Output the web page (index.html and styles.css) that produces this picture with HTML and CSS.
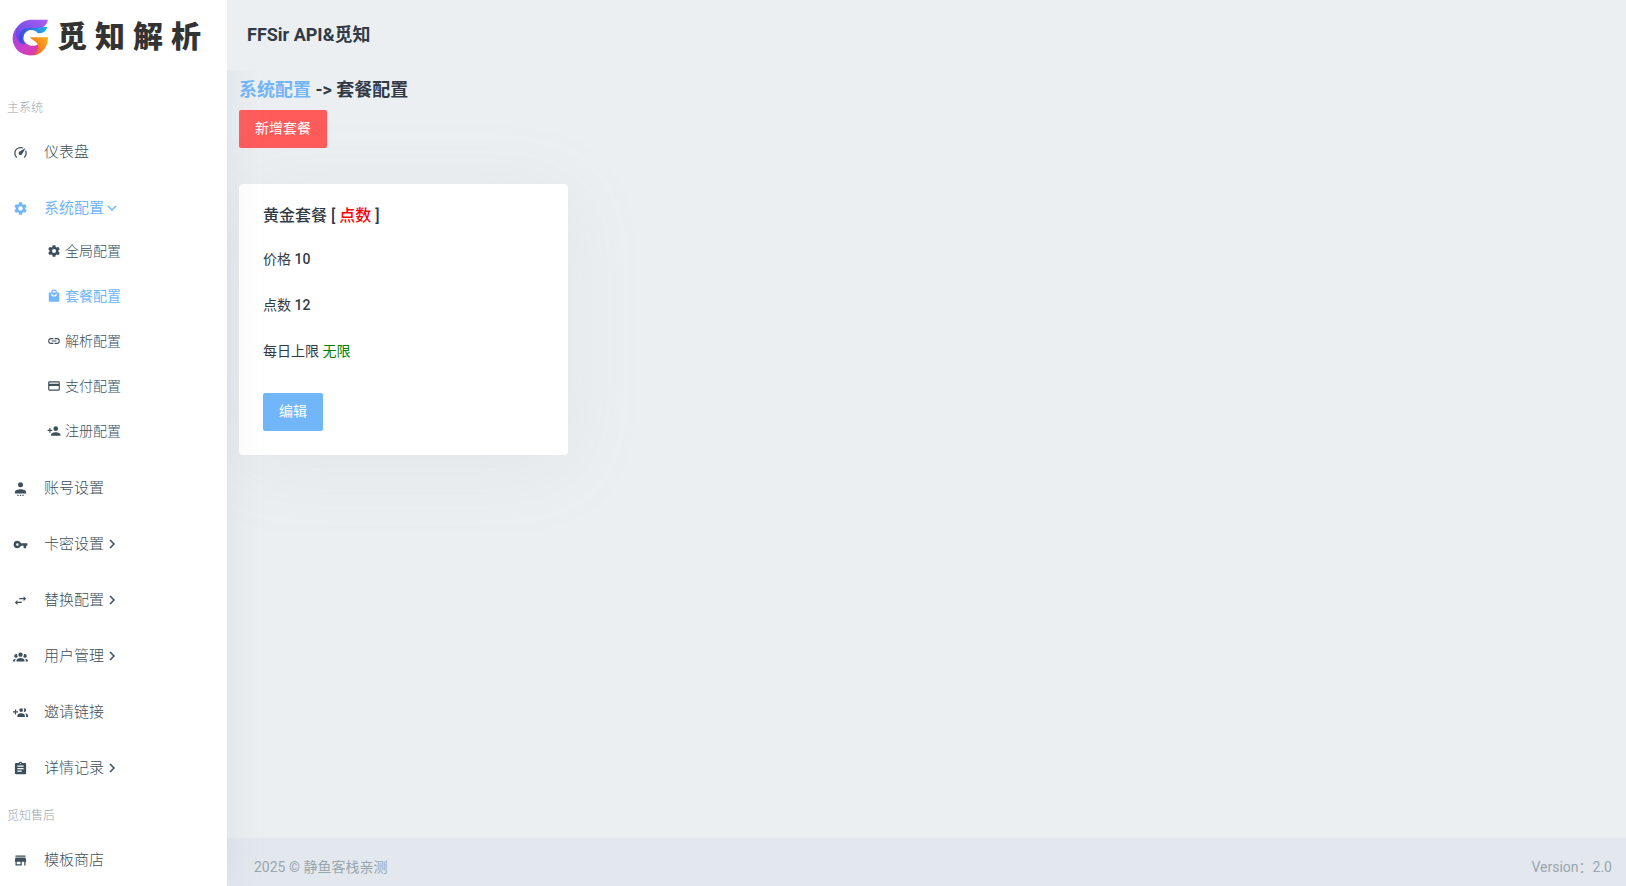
FILE: index.html
```html
<!DOCTYPE html>
<html lang="zh-CN">

<head>
    <meta charset="UTF-8">
    <meta name="viewport" content="width=device-width, initial-scale=1.0">
    <title>套餐配置</title>
    <link rel="stylesheet" href="styles.css">
</head>

<body>
    <aside class="sidebar">
        <a href="#" class="logo">
            <svg class="logo-mark" viewBox="0 0 108 110" aria-hidden="true">
                <defs>
                    <linearGradient id="ringTop" x1="0" y1="1" x2="1" y2="0">
                        <stop offset="0" stop-color="#5a48e8" />
                        <stop offset="1" stop-color="#b05cf0" />
                    </linearGradient>
                    <linearGradient id="ringBottom" x1="0" y1="0" x2="1" y2="1">
                        <stop offset="0" stop-color="#8450e0" />
                        <stop offset="0.5" stop-color="#c840d0" />
                        <stop offset="1" stop-color="#e83c8c" />
                    </linearGradient>
                    <linearGradient id="fold" x1="0" y1="0" x2="1" y2="0">
                        <stop offset="0" stop-color="#3a48e0" />
                        <stop offset="1" stop-color="#20b4e8" />
                    </linearGradient>
                    <linearGradient id="hook" x1="0" y1="1" x2="1" y2="0">
                        <stop offset="0" stop-color="#f0502c" />
                        <stop offset="1" stop-color="#ffb414" />
                    </linearGradient>
                </defs>
                <path fill="url(#ringBottom)" d="M28 14C-6 30-10 82 28 102c30 14 58 4 68-22l-18-6c-16 12-42 6-48-22z" />
                <path fill="url(#fold)" d="M20 66c-4-24 10-42 30-42h54c-4 14-14 20-28 18-12-14-36-12-42 8-3 10-1 18 4 26-8 0-14-4-18-10z" />
                <path fill="url(#ringTop)" d="M106 2c-4 14-10 22-24 24H50C28 28 16 44 20 66 4 50 8 20 32 8c10-5 18-6 28-6z" />
                <path fill="url(#hook)" d="M52 54h54c0 26-14 48-42 54 10-10 14-20 12-30-2-10-14-14-24-24z" />
            </svg>
            <span class="logo-text"><span>觅</span><span>知</span><span>解</span><span>析</span></span>
        </a>

        <nav>
            <p class="menu-title">主系统</p>
            <ul class="menu">
                <li>
                    <a href="#">
                        <svg class="icon" viewBox="0 0 24 24"><path d="M12,16A3,3 0 0,1 9,13C9,11.88 9.61,10.9 10.5,10.39L20.21,4.77L14.68,14.35C14.18,15.33 13.17,16 12,16M12,3C13.81,3 15.5,3.5 16.97,4.32L14.87,5.53C14,5.19 13,5 12,5A8,8 0 0,0 4,13C4,15.21 4.89,17.21 6.34,18.65H6.35C6.74,19.04 6.74,19.67 6.35,20.06C5.96,20.45 5.32,20.45 4.93,20.07C3.12,18.26 2,15.76 2,13A10,10 0 0,1 12,3M22,13C22,15.76 20.88,18.26 19.07,20.07C18.68,20.45 18.05,20.45 17.66,20.06C17.27,19.67 17.27,19.04 17.66,18.65C19.11,17.2 20,15.21 20,13C20,12 19.81,11 19.46,10.1L20.67,8C21.5,9.5 22,11.18 22,13Z" /></svg>
                        <span>仪表盘</span>
                    </a>
                </li>
                <li>
                    <a href="#" class="active">
                        <svg class="icon" viewBox="0 0 24 24"><path id="gear" d="M12,15.5A3.5,3.5 0 0,1 8.5,12A3.5,3.5 0 0,1 12,8.5A3.5,3.5 0 0,1 15.5,12A3.5,3.5 0 0,1 12,15.5M19.43,12.97C19.47,12.65 19.5,12.33 19.5,12C19.5,11.67 19.47,11.34 19.43,11L21.54,9.37C21.73,9.22 21.78,8.95 21.66,8.73L19.66,5.27C19.54,5.05 19.27,4.96 19.05,5.05L16.56,6.05C16.04,5.66 15.5,5.32 14.87,5.07L14.5,2.42C14.46,2.18 14.25,2 14,2H10C9.75,2 9.54,2.18 9.5,2.42L9.13,5.07C8.5,5.32 7.96,5.66 7.44,6.05L4.95,5.05C4.73,4.96 4.46,5.05 4.34,5.27L2.34,8.73C2.21,8.95 2.27,9.22 2.46,9.37L4.57,11C4.53,11.34 4.5,11.67 4.5,12C4.5,12.33 4.53,12.65 4.57,12.97L2.46,14.63C2.27,14.78 2.21,15.05 2.34,15.27L4.34,18.73C4.46,18.95 4.73,19.03 4.95,18.95L7.44,17.94C7.96,18.34 8.5,18.68 9.13,18.93L9.5,21.58C9.54,21.82 9.75,22 10,22H14C14.25,22 14.46,21.82 14.5,21.58L14.87,18.93C15.5,18.67 16.04,18.34 16.56,17.94L19.05,18.95C19.27,19.03 19.54,18.95 19.66,18.73L21.66,15.27C21.78,15.05 21.73,14.78 21.54,14.63L19.43,12.97Z" /></svg>
                        <span>系统配置</span>
                        <svg class="arrow open" viewBox="0 0 12 12"><path d="M4 2l4 4-4 4" /></svg>
                    </a>
                    <ul class="submenu">
                        <li>
                            <a href="#">
                                <svg class="icon" viewBox="0 0 24 24"><use href="#gear" /></svg>
                                <span>全局配置</span>
                            </a>
                        </li>
                        <li>
                            <a href="#" class="active">
                                <svg class="icon" viewBox="0 0 24 24"><path d="M12,13A5,5 0 0,1 7,8H9A3,3 0 0,0 12,11A3,3 0 0,0 15,8H17A5,5 0 0,1 12,13M12,3A3,3 0 0,1 15,6H9A3,3 0 0,1 12,3M19,6H17A5,5 0 0,0 12,1A5,5 0 0,0 7,6H5C3.89,6 3,6.89 3,8V20A2,2 0 0,0 5,22H19A2,2 0 0,0 21,20V8C21,6.89 20.1,6 19,6Z" /></svg>
                                <span>套餐配置</span>
                            </a>
                        </li>
                        <li>
                            <a href="#">
                                <svg class="icon" viewBox="0 0 24 24"><path d="M3.9,12C3.9,10.29 5.29,8.9 7,8.9H11V7H7A5,5 0 0,0 2,12A5,5 0 0,0 7,17H11V15.1H7C5.29,15.1 3.9,13.71 3.9,12M8,13H16V11H8V13M17,7H13V8.9H17C18.71,8.9 20.1,10.29 20.1,12C20.1,13.71 18.71,15.1 17,15.1H13V17H17A5,5 0 0,0 22,12A5,5 0 0,0 17,7Z" /></svg>
                                <span>解析配置</span>
                            </a>
                        </li>
                        <li>
                            <a href="#">
                                <svg class="icon" viewBox="0 0 24 24"><path d="M20,8H4V6H20M20,18H4V12H20M20,4H4C2.89,4 2,4.89 2,6V18A2,2 0 0,0 4,20H20A2,2 0 0,0 22,18V6C22,4.89 21.1,4 20,4Z" /></svg>
                                <span>支付配置</span>
                            </a>
                        </li>
                        <li>
                            <a href="#">
                                <svg class="icon" viewBox="0 0 24 24"><path d="M15,14C12.33,14 7,15.33 7,18V20H23V18C23,15.33 17.67,14 15,14M6,10V7H4V10H1V12H4V15H6V12H9V10M15,12A4,4 0 0,0 19,8A4,4 0 0,0 15,4A4,4 0 0,0 11,8A4,4 0 0,0 15,12Z" /></svg>
                                <span>注册配置</span>
                            </a>
                        </li>
                    </ul>
                </li>
                <li>
                    <a href="#">
                        <svg class="icon" viewBox="0 0 24 24"><path d="M9,22H7V24H9V22M13,22H11V24H13V22M17,22H15V24H17V22M12,2A4,4 0 0,0 8,6A4,4 0 0,0 12,10A4,4 0 0,0 16,6A4,4 0 0,0 12,2M12,13C8,13 3,14.5 3,17.5V20H21V17.5C21,14.5 16,13 12,13Z" /></svg>
                        <span>账号设置</span>
                    </a>
                </li>
                <li>
                    <a href="#">
                        <svg class="icon" viewBox="0 0 24 24"><path d="M7,14A2,2 0 0,1 5,12A2,2 0 0,1 7,10A2,2 0 0,1 9,12A2,2 0 0,1 7,14M12.65,10C11.83,7.67 9.61,6 7,6A6,6 0 0,0 1,12A6,6 0 0,0 7,18C9.61,18 11.83,16.33 12.65,14H17V18H21V14H23V10H12.65Z" /></svg>
                        <span>卡密设置</span>
                        <svg class="arrow" viewBox="0 0 12 12"><path d="M4 2l4 4-4 4" /></svg>
                    </a>
                </li>
                <li>
                    <a href="#">
                        <svg class="icon" viewBox="0 0 24 24"><path d="M21,9L17,5V8H10V10H17V13M7,11L3,15L7,19V16H14V14H7V11Z" /></svg>
                        <span>替换配置</span>
                        <svg class="arrow" viewBox="0 0 12 12"><path d="M4 2l4 4-4 4" /></svg>
                    </a>
                </li>
                <li>
                    <a href="#">
                        <svg class="icon" viewBox="0 0 24 24"><path d="M12,5.5A3.5,3.5 0 0,1 15.5,9A3.5,3.5 0 0,1 12,12.5A3.5,3.5 0 0,1 8.5,9A3.5,3.5 0 0,1 12,5.5M5,8C5.56,8 6.08,8.15 6.53,8.42C6.38,9.85 6.8,11.27 7.66,12.38C7.16,13.34 6.16,14 5,14A3,3 0 0,1 2,11A3,3 0 0,1 5,8M19,8A3,3 0 0,1 22,11A3,3 0 0,1 19,14C17.84,14 16.84,13.34 16.34,12.38C17.2,11.27 17.62,9.85 17.47,8.42C17.92,8.15 18.44,8 19,8M5.5,18.25C5.5,16.18 8.41,14.5 12,14.5C15.59,14.5 18.5,16.18 18.5,18.25V20H5.5V18.25M0,20V18.5C0,17.11 1.89,15.94 4.45,15.6C3.86,16.28 3.5,17.22 3.5,18.25V20H0M24,20H20.5V18.25C20.5,17.22 20.14,16.28 19.55,15.6C22.11,15.94 24,17.11 24,18.5V20Z" /></svg>
                        <span>用户管理</span>
                        <svg class="arrow" viewBox="0 0 12 12"><path d="M4 2l4 4-4 4" /></svg>
                    </a>
                </li>
                <li>
                    <a href="#">
                        <svg class="icon" viewBox="0 0 24 24"><path d="M19,17V19H7V17S7,13 13,13S19,17 19,17M16,8A3,3 0 1,0 13,11A3,3 0 0,0 16,8M19.2,13.06A5.6,5.6 0 0,1 21,17V19H24V17S24,13.55 19.2,13.06M18,5A2.91,2.91 0 0,0 17.11,5.14A5,5 0 0,1 17.11,10.86A2.91,2.91 0 0,0 18,11A3,3 0 0,0 18,5M8,10H5V7H3V10H0V12H3V15H5V12H8V10Z" /></svg>
                        <span>邀请链接</span>
                    </a>
                </li>
                <li>
                    <a href="#">
                        <svg class="icon" viewBox="0 0 24 24"><path d="M17,9H7V7H17M17,13H7V11H17M14,17H7V15H14M12,3A1,1 0 0,1 13,4A1,1 0 0,1 12,5A1,1 0 0,1 11,4A1,1 0 0,1 12,3M19,3H14.82C14.4,1.84 13.3,1 12,1C10.7,1 9.6,1.84 9.18,3H5A2,2 0 0,0 3,5V19A2,2 0 0,0 5,21H19A2,2 0 0,0 21,19V5A2,2 0 0,0 19,3Z" /></svg>
                        <span>详情记录</span>
                        <svg class="arrow" viewBox="0 0 12 12"><path d="M4 2l4 4-4 4" /></svg>
                    </a>
                </li>
            </ul>

            <p class="menu-title">觅知售后</p>
            <ul class="menu">
                <li>
                    <a href="#">
                        <svg class="icon" viewBox="0 0 24 24"><path d="M12,18H6V14H12M21,14V12L20,7H4L3,12V14H4V20H14V14H18V20H20V14M20,4H4V6H20V4Z" /></svg>
                        <span>模板商店</span>
                    </a>
                </li>
            </ul>
        </nav>
    </aside>

    <div class="page">
        <header class="topbar">
            <h4>FFSir API&amp;觅知</h4>
        </header>

        <main class="content">
            <h4 class="breadcrumb"><a href="#">系统配置</a> -&gt; 套餐配置</h4>
            <button type="button" class="btn btn-danger">新增套餐</button>

            <div class="cards">
                <section class="card">
                    <h5>黄金套餐 [ <span class="type">点数</span> ]</h5>
                    <p>价格 <b>10</b></p>
                    <p>点数 <b>12</b></p>
                    <p>每日上限 <span class="unlimited">无限</span></p>
                    <button type="button" class="btn btn-primary">编辑</button>
                </section>
            </div>
        </main>

        <footer class="footer">
            <span>2025 © 静鱼客栈亲测</span>
            <span>Version：2.0</span>
        </footer>
    </div>
</body>

</html>
```
FILE: styles.css
```css
* {
    box-sizing: border-box;
}

body {
    display: flex;
    min-height: 100vh;
    margin: 0;
    background-color: #ebeff2;
    color: #323a46;
    font-family: Roboto, "Noto Sans CJK SC", sans-serif;
    font-size: 14px;
    line-height: 22px;
}

h4,
h5,
p,
ul {
    margin: 0;
    padding: 0;
}

ul {
    list-style: none;
}

a {
    color: #71b6f9;
    text-decoration: none;
}

/* Sidebar */
.sidebar {
    position: sticky;
    top: 0;
    flex: none;
    width: 227px;
    height: 100vh;
    overflow: auto;
    scrollbar-width: none;
    background-color: #fff;
    box-shadow: 0 0 35px rgba(154, 161, 171, 0.2);
}

.logo {
    display: flex;
    align-items: center;
    gap: 8px;
    height: 74px;
    padding-left: 12px;
}

.logo-mark {
    width: 37px;
    height: 37px;
}

.logo-text {
    display: flex;
    gap: 8px;
    color: #333;
    font-size: 30px;
    font-weight: 900;
    line-height: 40px;
}

nav {
    padding-top: 14px;
}

.menu-title {
    padding: 9px 7px 5px;
    color: #98a6ad;
    font-size: 12px;
    font-weight: 300;
}

.menu a {
    display: flex;
    align-items: center;
    height: 56px;
    padding-left: 13px;
    color: #3d4f5a;
    font-size: 15px;
    font-weight: 300;
}

.menu .active {
    color: #71b6f9;
    font-weight: 400;
}

.icon {
    width: 15px;
    height: 15px;
    margin-right: 16px;
    fill: currentColor;
}

.arrow {
    width: 12px;
    height: 12px;
    margin-left: 2px;
    fill: none;
    stroke: currentColor;
    stroke-width: 1.5;
}

.arrow.open {
    transform: rotate(90deg);
}

.submenu {
    margin-top: -8px;
    padding-bottom: 7px;
}

.submenu a {
    height: 45px;
    padding-left: 47px;
    font-size: 14px;
}

.submenu .icon {
    width: 14px;
    height: 14px;
    margin-right: 4px;
}

/* Page */
.page {
    display: flex;
    flex: 1;
    flex-direction: column;
    min-width: 0;
}

.topbar {
    position: relative;
    display: flex;
    align-items: center;
    height: 70px;
    padding: 0 20px;
    background-color: #ebeff2;
}

.topbar h4,
.breadcrumb {
    font-size: 18px;
    font-weight: 700;
}

.breadcrumb {
    padding: 9px 0;
}

.content {
    flex: 1;
    padding: 0 12px;
}

.btn {
    height: 38px;
    padding: 0 16px 2px;
    border: 0;
    border-radius: 2px;
    color: #fff;
    font: inherit;
    cursor: pointer;
}

.btn-danger {
    background-color: #ff5b5b;
}

.btn-primary {
    margin-top: 7px;
    background-color: #71b6f9;
}

.cards {
    display: grid;
    grid-template-columns: repeat(4, 1fr);
    gap: 20px;
    padding-top: 36px;
}

.card {
    padding: 20px 24px 24px;
    border-radius: 4px;
    background-color: #fff;
    box-shadow: 0 10px 80px rgba(154, 161, 171, 0.1);
}

.card h5 {
    margin-bottom: 20px;
    font-size: 16px;
    font-weight: 500;
    line-height: 24px;
}

.card p {
    margin-bottom: 24px;
}

.card b {
    font-weight: 500;
}

.type {
    color: red;
}

.unlimited {
    color: green;
}

.footer {
    display: flex;
    justify-content: space-between;
    padding: 18px 14px 8px 27px;
    background-color: #e3e8ee;
    color: #98a6ad;
}
```
